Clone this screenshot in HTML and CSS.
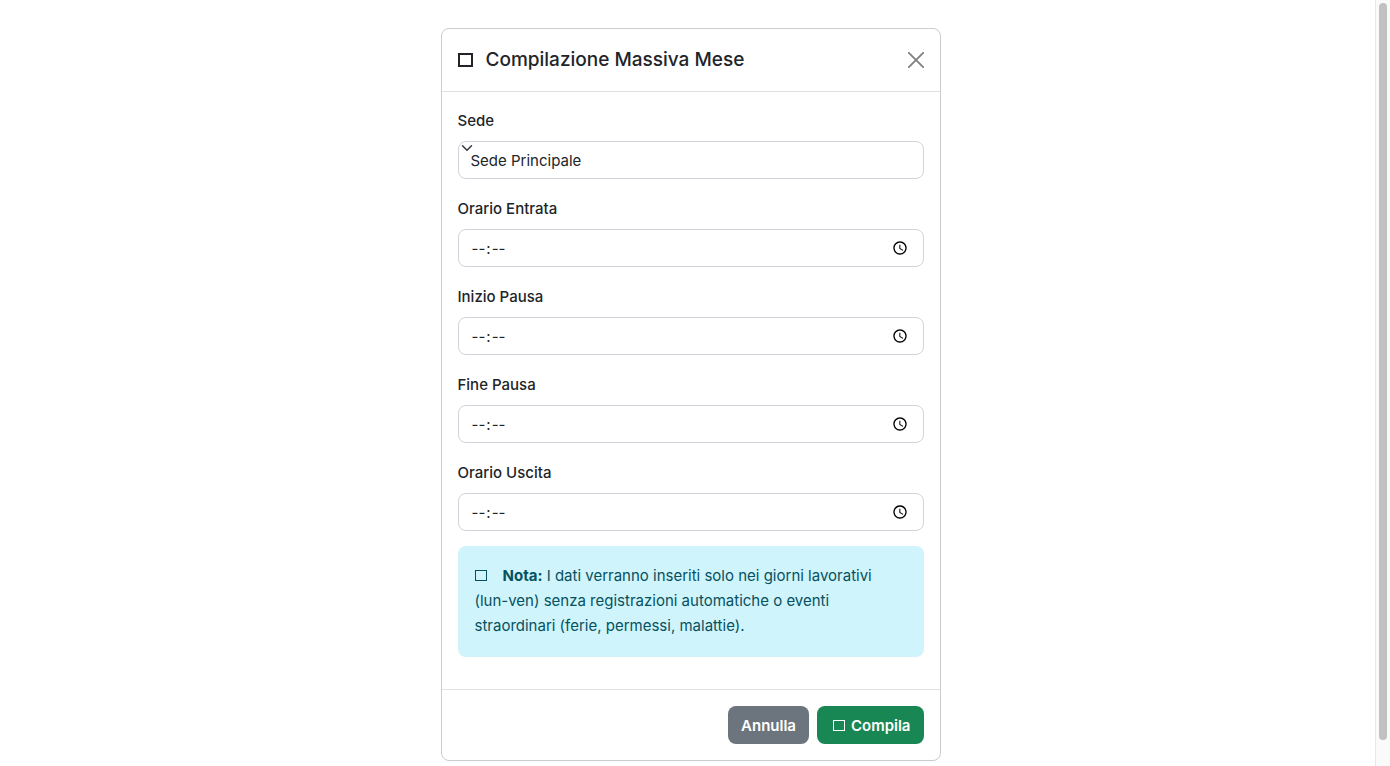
FILE: index.html
```html
<!DOCTYPE html>
<html lang="it">
<head>
<meta charset="utf-8">
<meta name="viewport" content="width=device-width, initial-scale=1">
<title>Compilazione Massiva Mese</title>
<link rel="stylesheet" href="styles.css">
</head>
<body>
<main class="viewport">
  <form class="modal" role="dialog" aria-labelledby="modal-title">
    <header class="modal-header">
      <h1 class="modal-title" id="modal-title"><span class="glyph glyph-large"></span>Compilazione Massiva Mese</h1>
      <button class="close" type="button" aria-label="Chiudi">
        <svg viewBox="0 0 16 16" width="16" height="16" aria-hidden="true"><path d="M.8 .8 15.2 15.2M15.2 .8 .8 15.2" fill="none" stroke="currentColor" stroke-width="1.8" stroke-linecap="round"/></svg>
      </button>
    </header>
    <div class="modal-body">
      <div class="fields">
        <div class="field">
          <label for="sede">Sede</label>
          <div class="select-wrap">
            <select class="control" id="sede"><option>Sede Principale</option></select>
            <svg class="chevron" viewBox="0 0 16 16" width="12" height="12" aria-hidden="true"><path d="m2 5 6 6 6-6" fill="none" stroke="#343a40" stroke-width="2" stroke-linecap="round" stroke-linejoin="round"/></svg>
          </div>
        </div>
        <div class="field"><label for="entrata">Orario Entrata</label><input class="control" id="entrata" type="time"></div>
        <div class="field"><label for="inizio">Inizio Pausa</label><input class="control" id="inizio" type="time"></div>
        <div class="field"><label for="fine">Fine Pausa</label><input class="control" id="fine" type="time"></div>
        <div class="field"><label for="uscita">Orario Uscita</label><input class="control" id="uscita" type="time"></div>
      </div>
      <p class="note"><span class="glyph glyph-note"></span><strong>Nota:</strong> I dati verranno inseriti solo nei giorni lavorativi (lun-ven) senza registrazioni automatiche o eventi straordinari (ferie, permessi, malattie).</p>
    </div>
    <footer class="modal-footer">
      <button class="btn btn-secondary" type="button">Annulla</button>
      <button class="btn btn-success" type="submit"><span class="glyph"></span>Compila</button>
    </footer>
  </form>
</main>
<div class="scrollbar" aria-hidden="true"><div class="thumb"></div></div>
</body>
</html>
```
FILE: styles.css
```css
* { box-sizing: border-box; }

body {
  margin: 0;
  display: flex;
  height: 100vh;
  overflow: hidden;
  background: #fff;
  color: #212529;
  font: 15px/25px Inter, "Liberation Sans", sans-serif;
}

.viewport {
  flex: 1;
  padding: 28px 8px 0;
  padding-right: 8px;
  padding-left: 14px;
}

.modal {
  max-width: 500px;
  margin: 0 auto;
  border: 1px solid #cbccce;
  border-radius: 8px;
  background: #fff;
}

.modal-header {
  display: flex;
  align-items: center;
  justify-content: space-between;
  padding: 16px;
  border-bottom: 1px solid #dee2e6;
}

.modal-title {
  display: flex;
  align-items: center;
  gap: 13px;
  margin: 0;
  font-size: 19px;
  font-weight: 500;
  line-height: 30px;
}

.glyph {
  display: inline-block;
  width: 12px;
  height: 11px;
  border: 1px solid currentColor;
}

.glyph-large {
  width: 15px;
  height: 14px;
  border-width: 2px;
}

.glyph-note { margin-right: 16px; }

.close {
  display: flex;
  padding: 0;
  border: 0;
  background: none;
  color: #7f7f7f;
}

.modal-body { padding: 16px; }

.fields {
  display: grid;
  gap: 17px;
}

.field {
  display: grid;
  gap: 8px;
}

.field label { font-weight: 500; }

.select-wrap { position: relative; }

.chevron {
  position: absolute;
  top: 1px;
  left: 3px;
  pointer-events: none;
}

.control {
  display: block;
  appearance: none;
  width: 100%;
  height: 38px;
  margin: 0;
  padding: 0 12px;
  border: 1px solid #ced4da;
  border-radius: 8px;
  background: #fff;
  color: inherit;
  font: inherit;
}

.control::-webkit-datetime-edit-ampm-field { display: none; }

.note {
  margin: 15px 0 16px;
  padding: 17px 17px 19px;
  border-radius: 8px;
  background: #cff4fc;
  color: #055160;
}

.modal-footer {
  display: flex;
  justify-content: flex-end;
  gap: 8px;
  padding: 16px;
  border-top: 1px solid #dee2e6;
}

.btn {
  display: flex;
  align-items: center;
  gap: 6px;
  height: 38px;
  padding: 0 13px;
  border: 0;
  border-radius: 8px;
  color: #fff;
  font: inherit;
  font-weight: 600;
}

.btn-secondary { background: #6c757d; }
.btn-success { background: #198754; padding-left: 16px; }

.scrollbar {
  width: 15px;
  padding: 3px;
  border-left: 1px solid #e8e8e8;
  background: #fafafa;
}

.thumb {
  width: 8px;
  height: 97%;
  border-radius: 4px;
  background: #c1c1c1;
}
```
